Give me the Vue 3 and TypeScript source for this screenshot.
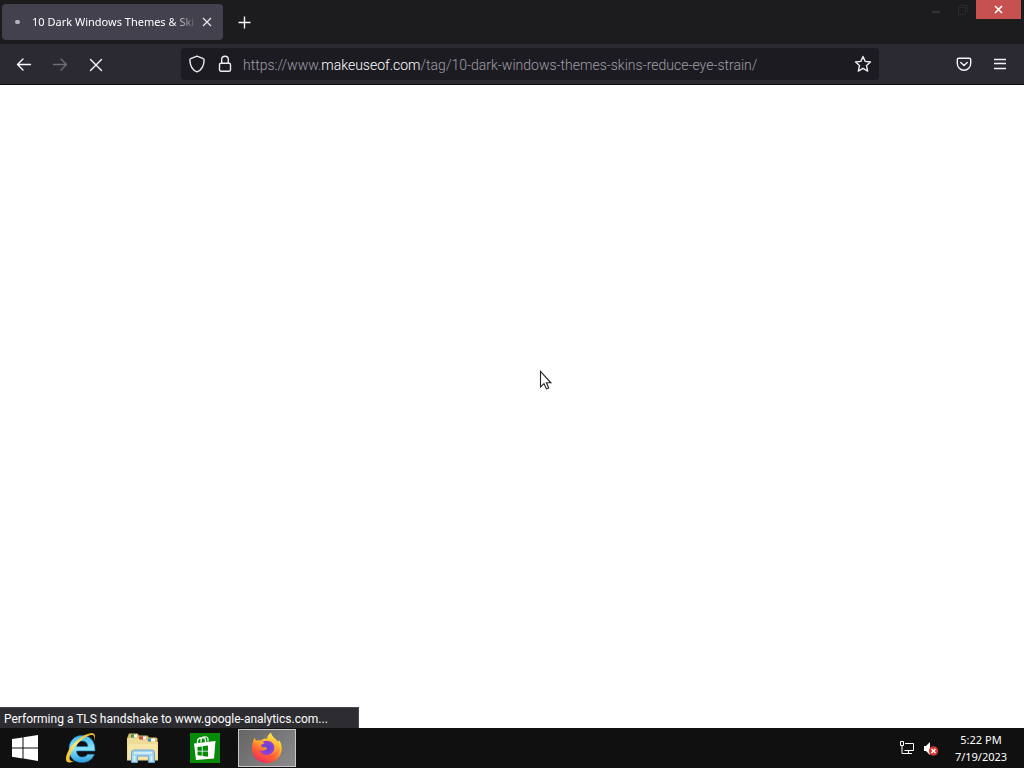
<script setup lang="ts">
import { ref } from 'vue'

const host = 'makeuseof.com'
const prefix = 'https://www.'
const path = '/tag/10-dark-windows-themes-skins-reduce-eye-strain/'
const address = ref(prefix + host + path)
const tabTitle = '10 Dark Windows Themes & Ski'
const status = 'Performing a TLS handshake to www.google-analytics.com...'
</script>

<template>
  <div class="desktop">
    <header class="tabstrip">
      <div class="tab">
        <span class="loading"></span>
        <span class="tab-title">{{ tabTitle }}</span>
        <button class="tab-close" aria-label="Close tab">
          <svg width="10" height="10" viewBox="0 0 10 10"><path d="M1 1l8 8M9 1l-8 8" stroke="#e8e8ee" stroke-width="1.2" /></svg>
        </button>
      </div>
      <button class="new-tab" aria-label="New tab">
        <svg width="13" height="13" viewBox="0 0 13 13"><path d="M6.500 .5v12M.5 6.500h12" stroke="#f8f8fb" stroke-width="1.4" /></svg>
      </button>
      <div class="window-buttons">
        <button class="win-btn" aria-label="Minimize">
          <svg width="10" height="12" viewBox="0 0 10 12"><path d="M1 8h8" stroke="#343434" stroke-width="2" /></svg>
        </button>
        <button class="win-btn" aria-label="Restore">
          <svg width="12" height="12" viewBox="0 0 12 12" fill="none" stroke="#2b2b2b"><path d="M1.500 3.500h7v7h-7zM3.500 1.500h7v7" /></svg>
        </button>
        <button class="win-close" aria-label="Close window">
          <svg width="9" height="9" viewBox="0 0 9 9"><path d="M1 1l7 7M8 1l-7 7" stroke="#fff" stroke-width="1.700" /></svg>
        </button>
      </div>
    </header>

    <nav class="toolbar">
      <div class="history">
        <button class="tool" aria-label="Back">
          <svg width="16" height="16" viewBox="0 0 16 16" fill="none" stroke="#fbfbfe" stroke-width="1.400" stroke-linecap="round" stroke-linejoin="round"><path d="M14.500 8.500H1.500M7 3L1.500 8.500 7 14" /></svg>
        </button>
        <button class="tool" aria-label="Forward" disabled>
          <svg width="16" height="16" viewBox="0 0 16 16" fill="none" stroke="#6e6d76" stroke-width="1.400" stroke-linecap="round" stroke-linejoin="round"><path d="M1.500 8.500h13M9 3l5.500 5.500L9 14" /></svg>
        </button>
        <button class="tool" aria-label="Stop">
          <svg width="16" height="16" viewBox="0 0 16 16" stroke="#fbfbfe" stroke-width="1.400" stroke-linecap="round"><path d="M2.500 3.500l11 11M13.500 3.500l-11 11" /></svg>
        </button>
      </div>
      <div class="urlbar">
        <button class="url-btn" aria-label="Tracking protection">
          <svg width="16" height="18" viewBox="0 0 16 18" fill="none" stroke="#ececf0" stroke-width="1.400" stroke-linejoin="round"><path d="M8 1.200L14.300 3.700c.6.200.8.600.8 1.200C15 10.600 13 14.800 8 16.800 3 14.800 1 10.600.9 4.900c0-.6.200-1 .8-1.200z" /></svg>
        </button>
        <button class="url-btn" aria-label="Site security">
          <svg width="14" height="18" viewBox="0 0 14 18" fill="none" stroke="#ececf0" stroke-width="1.400"><rect x="1.500" y="8.300" width="11" height="8" rx="1.500" /><path d="M3.700 8V4.500a3.300 3.300 0 0 1 6.600 0V8" /></svg>
        </button>
        <div class="address">
          <input v-model="address" aria-label="Address" spellcheck="false" />
          <span class="address-text" aria-hidden="true">{{ prefix }}<b>{{ host }}</b>{{ path }}</span>
        </div>
        <button class="url-btn" aria-label="Bookmark this page">
          <svg width="18" height="18" viewBox="0 0 18 18" fill="none" stroke="#ececf0" stroke-width="1.400" stroke-linejoin="round"><path d="M9 1.500l2.200 4.900 5.300.6-4 3.600 1.200 5.500L9 13.300l-4.700 2.800 1.200-5.500-4-3.600 5.300-.6z" /></svg>
        </button>
      </div>
      <div class="actions">
        <button class="tool" aria-label="Save to Pocket">
          <svg width="16" height="16" viewBox="0 0 16 16" fill="none" stroke="#f4f4f8" stroke-width="1.400" stroke-linecap="round" stroke-linejoin="round"><path d="M2.700 2.200h10.600c.8 0 1.400.6 1.400 1.400v3.900a6.700 6.700 0 0 1-13.400 0V3.600c0-.8.600-1.400 1.400-1.400zM4.800 6.500L8 9.500l3.200-3" /></svg>
        </button>
        <button class="tool" aria-label="Open menu">
          <svg width="14" height="16" viewBox="0 0 14 16" stroke="#f4f4f8" stroke-width="1.300"><path d="M1 3.500h12M1 7.500h12M1 12.500h12" /></svg>
        </button>
      </div>
    </nav>

    <main class="page">
      <svg class="cursor" width="14" height="21" viewBox="0 0 14 21"><path d="M1.500 1.500v15.500l3.500-3.300 2.400 5.200 2.300-1-2.300-5.100h4.500z" fill="#fff" stroke="#222" stroke-width="1.100" /></svg>
      <div class="status">{{ status }}</div>
    </main>

    <footer class="taskbar">
      <button class="start" aria-label="Start">
        <svg width="28" height="28" viewBox="0 0 28 28" fill="#fff"><path d="M1 5l10.500-1.600v10H1zM12.500 3.200L27 1v12.400H12.500zM1 14.400h10.500v10L1 22.800zM12.500 14.400H27V27l-14.500-2.400z" /></svg>
      </button>
      <button class="app" aria-label="Internet Explorer">
        <svg width="34" height="34" viewBox="0 0 34 34">
          <defs>
            <linearGradient id="ie" x1="0" y1="0" x2="0" y2="1"><stop offset="0" stop-color="#42bdec" /><stop offset=".5" stop-color="#8be4fb" /><stop offset="1" stop-color="#2c9edb" /></linearGradient>
            <linearGradient id="ring" x1="0" y1="1" x2="1" y2="0"><stop offset="0" stop-color="#f1bb18" /><stop offset=".5" stop-color="#ffe778" /><stop offset="1" stop-color="#e4a71c" /></linearGradient>
          </defs>
          <path d="M31 20H12.500c.3 4 2.700 6 6 6 2.500 0 4-.9 5-2.700h6.800C28.500 28.500 24.300 31.500 18 31.500 9.800 31.500 5 26 5 18.200 5 10.300 10 4.500 18 4.500c8.500 0 13.400 6 13 15.500zM12.600 15.500h11.300c-.3-3.600-2.400-5.400-5.600-5.400-3.200 0-5.200 2-5.700 5.400z" fill="url(#ie)" stroke="#1774b8" stroke-width=".6" />
          <path d="M30.300 10.500C32 5 31 1.500 26.500 2.200 19 3.200 8 12 3.800 21c-3.300 7-2.300 11.500 3 10.300 1.300-.3 2.600-.9 4-1.700-4.600 1.600-6.300-.5-4.500-6C9.500 15.500 19 6.300 26 4.300c4-1.200 5 1.500 4.300 6.200z" fill="url(#ring)" />
        </svg>
      </button>
      <button class="app" aria-label="File Explorer">
        <svg width="34" height="32" viewBox="0 0 34 32">
          <path d="M1.500 5l1.500-3.500h8.500l1.500 2h8.500l1.500 2H30q1.500 0 1.500 1.500v21H1.500z" fill="#d9bd6c" />
          <path d="M5 2.500h5v3H5z" fill="#3e9a46" /><path d="M8 2.500h3v3H8z" fill="#fff" /><path d="M13 4.500h6v3h-6z" fill="#c94f38" /><path d="M17 4.500h3v3h-3z" fill="#fff" /><path d="M22 6.500h4v3h-4z" fill="#488bc9" /><path d="M25 6.500h4v3h-4z" fill="#fff" />
          <path d="M1 6h11.500l1.500 2h7l1.500 2h9.500v18.500H1z" fill="#efdb97" />
          <path d="M2 12h29v15H2z" fill="#f5e5a9" />
          <path d="M5.500 30.500V21q0-3 3-3h17q3 0 3 3v9.500h-6V24h-11v6.500z" fill="#a4d4ee" stroke="#6aa6d0" />
          <path d="M8 21h18M8.500 24v5M25.500 24v5" stroke="#dff5fd" stroke-width="1.500" />
        </svg>
      </button>
      <button class="app" aria-label="Store">
        <svg width="30" height="30" viewBox="0 0 30 30">
          <path d="M0 0h30v30H0z" fill="#078a08" />
          <path d="M7.500 11V8q0-2.500 3-3l2-.3q3 0 3 3V10M11 9.500V7q0-2.500 3-3 4-.7 4 2.500v2" fill="none" stroke="#e8f6e8" stroke-width="1.300" />
          <path d="M4 10.500L25.500 8 24 25.500 6 27z" fill="#fff" />
          <path d="M7.500 14l4.300-.6v4.300H7.500zM12.600 13.300l5.400-.8v5.200h-5.400zM7.500 18.500h4.300v4.300l-4.300-.6zM12.600 18.500H18v5.200l-5.400-.8z" fill="#078a08" />
        </svg>
      </button>
      <button class="app active" aria-label="Firefox">
        <svg width="32" height="32" viewBox="0 0 32 32">
          <defs>
            <linearGradient id="fox" x1=".8" y1="0" x2=".2" y2="1"><stop offset="0" stop-color="#ffe94a" /><stop offset=".35" stop-color="#ffad2b" /><stop offset=".65" stop-color="#ff5b36" /><stop offset="1" stop-color="#e62465" /></linearGradient>
            <linearGradient id="flame" x1=".6" y1="0" x2=".4" y2="1"><stop offset="0" stop-color="#fff050" /><stop offset=".5" stop-color="#ffb52e" /><stop offset="1" stop-color="#ff4f3c" /></linearGradient>
            <radialGradient id="globe"><stop offset="0" stop-color="#5a45d8" /><stop offset="1" stop-color="#9b3fd2" /></radialGradient>
          </defs>
          <path d="M3.500 5.500c.5 1.500 1.200 2.500 2 3.200 1.400-.5 3-.5 4.300 0 1-1.200 2.500-2 4.200-2.200L22 8c2 .4 3.800 2 4.500 3.500L28 8c2.700 3.800 3.500 8.500 2 13-2 6-7.500 10-14 10C7.500 31 1 25 1 17c0-4.500 1-8.500 2.500-11.500z" fill="url(#fox)" />
          <path d="M20 .500c-4 3-4.800 6.500-3 9 5 0 8 4 7.500 8-.6 4.500-5.500 6.500-9.500 5 2.500 3 8 3.500 11.500 0 3-3 3.500-7.500 1.500-11.500-2-4-7-5.500-8-10.500z" fill="url(#flame)" />
          <path d="M11 10c4-2.500 10-1.500 12 3 1.800 4.800-1.500 10-7 10-3.800 0-6.700-2.200-7.300-5 1.700 1 3.500 1.200 5 .3 1.300-.8 2.300-1 2.300-1.800 0-1.200-1.500-1.500-3-1.200-1.700.3-3-.3-3-1.700 0-1 1-1.300 2-1.700l1.500-.9c-.7-.7-1.500-.9-2.500-1z" fill="url(#globe)" />
        </svg>
      </button>
      <div class="tray">
        <button class="tray-icon" aria-label="Network">
          <svg width="16" height="16" viewBox="0 0 16 16" fill="none" stroke="#fff"><path d="M6 3.500h8.500v7H5.500M9.500 10.500v3M6 13.500h7M1.500 1.500h3v4h-3zM3 5.500v8h3" /></svg>
        </button>
        <button class="tray-icon" aria-label="Volume muted">
          <svg width="16" height="16" viewBox="0 0 16 16"><path d="M1 6h2l4-4v13l-4-4H1z" fill="#fff" /><circle cx="10.500" cy="11" r="4.700" fill="#d83a32" /><path d="M8.500 9l4 4M12.500 9l-4 4" stroke="#fff" stroke-width="1.500" /></svg>
        </button>
        <button class="clock"><time>5:22 PM</time><time>7/19/2023</time></button>
      </div>
    </footer>
  </div>
</template>

<style>
html,
body {
  margin: 0;
}
</style>

<style scoped>
.desktop {
  display: flex;
  flex-direction: column;
  min-height: 100vh;
  font-family: "Noto Sans", "Open Sans", sans-serif;
  font-size: 11px;
  color: #fff;
  background: #fff;
}
button {
  display: flex;
  align-items: center;
  justify-content: center;
  padding: 0;
  border: 0;
  background: none;
  color: inherit;
  font: inherit;
}
svg {
  display: block;
}
.tabstrip {
  display: flex;
  align-items: flex-start;
  height: 44px;
  background: #1c1b1d;
}
.tab {
  display: flex;
  align-items: center;
  box-sizing: border-box;
  width: 221px;
  height: 36px;
  margin: 4px 0 0 2px;
  padding: 0 8px 0 13px;
  border-radius: 4px;
  background: #42414d;
}
.loading {
  flex: none;
  width: 5px;
  height: 4px;
  margin-right: 12px;
  border-radius: 2px;
  background: #b5b4c0;
}
.tab-title {
  flex: 1;
  line-height: 20px;
  white-space: nowrap;
  mask-image: linear-gradient(to left, transparent, #000 28px);
}
.tab-close {
  width: 16px;
  height: 16px;
}
.new-tab {
  width: 36px;
  height: 36px;
  margin: 4px 0 0 3px;
}
.window-buttons {
  display: flex;
  margin-left: auto;
}
.win-btn {
  width: 27px;
  height: 20px;
}
.win-close {
  width: 45px;
  height: 19px;
  margin-right: 3px;
  background: #c75050;
}
.toolbar {
  display: flex;
  align-items: center;
  box-sizing: border-box;
  height: 41px;
  border-bottom: 1px solid #0c0c0d;
  background: #2b2a33;
}
.history,
.actions {
  display: flex;
}
.history {
  margin-left: 6px;
}
.actions {
  margin: 0 6px 0 67px;
}
.tool {
  width: 36px;
  height: 32px;
}
.urlbar {
  display: flex;
  flex: 1;
  align-items: center;
  height: 32px;
  margin-left: 67px;
  padding: 0 2px;
  border-radius: 4px;
  background: #1c1b22;
}
.url-btn {
  width: 28px;
  height: 28px;
}
.address {
  display: grid;
  flex: 1;
  align-items: center;
  margin-left: 4px;
  padding-top: 2px;
  font-family: Roboto, "Open Sans", sans-serif;
  font-size: 14px;
  font-weight: 300;
  line-height: 20px;
}
.address input,
.address-text {
  grid-area: 1 / 1;
  min-width: 0;
  padding: 0;
  border: 0;
  white-space: nowrap;
}
.address input {
  outline: 0;
  background: none;
  color: transparent;
  font: inherit;
}
.address-text {
  overflow: hidden;
  color: #a09fa7;
  pointer-events: none;
}
.address-text b {
  color: #fff;
  font-weight: inherit;
}
.page {
  position: relative;
  display: flex;
  flex: 1;
  align-items: flex-end;
  background: #fff;
}
.cursor {
  position: absolute;
  top: 285px;
  left: 539px;
}
.status {
  box-sizing: border-box;
  width: 359px;
  height: 21px;
  padding-left: 4px;
  border-top: 1px solid #48474d;
  border-right: 1px solid #48474d;
  background: #2d2c31;
  font-family: Roboto, "Open Sans", sans-serif;
  font-size: 12px;
  line-height: 22px;
  white-space: nowrap;
}
.taskbar {
  display: flex;
  align-items: center;
  height: 40px;
  background: #101010;
}
.start {
  width: 50px;
  height: 40px;
}
.app {
  box-sizing: border-box;
  width: 58px;
  height: 38px;
  margin-right: 4px;
}
.start + .app {
  margin-left: 2px;
}
.active {
  border: 1px solid #c8c8c8;
  background: linear-gradient(135deg, #656565, #8b8b8b);
}
.tray {
  display: flex;
  align-items: center;
  gap: 8px;
  margin-left: auto;
  padding-right: 9px;
}
.clock {
  flex-direction: column;
  width: 68px;
  line-height: 17px;
}
</style>
